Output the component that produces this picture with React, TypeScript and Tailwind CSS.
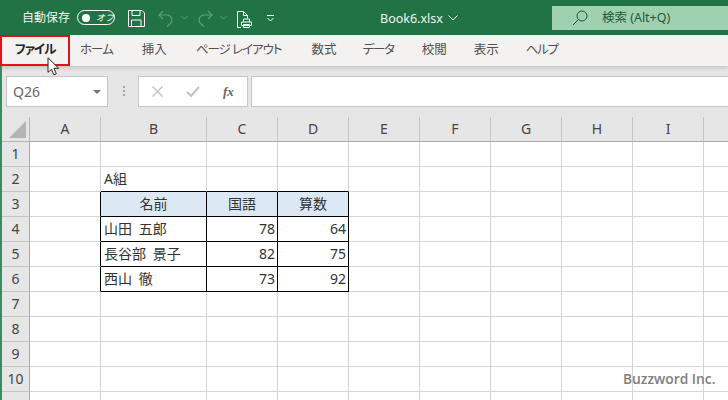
const font = '"Noto Sans","Noto Sans CJK JP",sans-serif';
const cols = ["A", "B", "C", "D", "E", "F", "G", "H", "I", ""];
const rows = [1, 2, 3, 4, 5, 6, 7, 8, 9, 10, 0];
const tabs = [
  { t: "ホーム", c: "tracking-[-1px]" },
  { t: "挿入", c: "ml-[29px]" },
  { t: "ページ レイアウト", c: "ml-[29px] tracking-[-1px]" },
  { t: "数式", c: "ml-[30px]" },
  { t: "データ", c: "ml-[26px] tracking-[-1.300px]" },
  { t: "校閲", c: "ml-[28px]" },
  { t: "表示", c: "ml-[27px]" },
  { t: "ヘルプ", c: "ml-[27px] tracking-[-1.300px]" },
];

type Cell = { t: string; align?: "left" | "right" | "center" };
const data: Record<string, Cell> = {
  B2: { t: "A組" },
  B3: { t: "名前", align: "center" },
  C3: { t: "国語", align: "center" },
  D3: { t: "算数", align: "center" },
  B4: { t: "山田 五郎" },
  C4: { t: "78", align: "right" },
  D4: { t: "64", align: "right" },
  B5: { t: "長谷部 景子" },
  C5: { t: "82", align: "right" },
  D5: { t: "75", align: "right" },
  B6: { t: "西山 徹" },
  C6: { t: "73", align: "right" },
  D6: { t: "92", align: "right" },
};

function cellClass(c: string, r: number) {
  const inTable = "BCD".includes(c || "Z") && r >= 3 && r <= 6;
  const right = inTable || (c === "A" && r >= 3 && r <= 6);
  const bottom = inTable || ("BCD".includes(c || "Z") && r === 2);
  const head = inTable && r === 3;
  return [
    "flex items-center overflow-hidden whitespace-nowrap border-r border-b pb-[2px] text-[14px] text-[#333333] [word-spacing:3px]",
    right ? "border-r-black" : "border-r-[#d4d4d4]",
    bottom ? "border-b-black" : "border-b-[#d4d4d4]",
    head ? "bg-[#dce9f5]" : "bg-white",
  ].join(" ");
}

function App() {
  return (
    <div className="relative flex h-[400px] w-[728px] flex-col overflow-hidden bg-[#e6e6e6]" style={{ fontFamily: font }}>
      {/* title bar */}
      <div className="flex h-[35px] shrink-0 items-start bg-[#217346] text-white">
        <span className="ml-[22px] mt-[9px] text-[12px] leading-[18px] text-[#f0f6f2]">自動保存</span>
        <div className="ml-[7px] mt-[10px] flex h-[15px] w-[38px] items-center rounded-full border border-white pl-[4px]">
          <span className="h-[8px] w-[8px] rounded-full bg-white" />
          <span className="ml-[6px] text-[9px] italic leading-none">オフ</span>
        </div>
        <svg className="ml-[13px] mt-[10px]" width="17" height="17" viewBox="0 0 17 17" fill="none" stroke="#fff" strokeWidth="1">
          <path d="M.5.5h13.500l2.500 2.500v13.500H.5z" />
          <path d="M4 .5v5h8v-5M3.500 16.500v-6.500h9.500v6.500" />
        </svg>
        <svg className="ml-[13px] mt-[10px]" width="16" height="17" viewBox="0 0 16 17" fill="none" stroke="#5a9e7a" strokeWidth="1.2">
          <path d="M5 1 1 5l4 4M1 5h8a5 5 0 0 1 3.500 8.500L9 16.500" />
        </svg>
        <svg className="ml-[7px] mt-[15px]" width="7" height="5" viewBox="0 0 7 5" fill="none" stroke="#5a9e7a" strokeWidth="1">
          <path d="m.5 1 3 3 3-3" />
        </svg>
        <svg className="ml-[9px] mt-[10px]" width="16" height="17" viewBox="0 0 16 17" fill="none" stroke="#5a9e7a" strokeWidth="1.2">
          <path d="m11 1 4 4-4 4M15 5H7a5 5 0 0 0-3.500 8.500L7 16.500" />
        </svg>
        <svg className="ml-[7px] mt-[15px]" width="7" height="5" viewBox="0 0 7 5" fill="none" stroke="#5a9e7a" strokeWidth="1">
          <path d="m.5 1 3 3 3-3" />
        </svg>
        <svg className="ml-[10px] mt-[11px]" width="15" height="17" viewBox="0 0 15 17" fill="none" stroke="#fff" strokeWidth="1">
          <path d="M4 16.500H.5V.5h6l4 4v3M6.500.5v4h4" />
          <path d="M6.500 11V8h6v3M4.500 11h10v3.500h-10zM6.500 13.500h6v3h-6z" fill="#217346" />
        </svg>
        <svg className="ml-[15px] mt-[15px]" width="7" height="7" viewBox="0 0 7 7" fill="none" stroke="#fff" strokeWidth="1">
          <path d="M0 .5h7M.5 3l3 3 3-3" />
        </svg>
        <span className="ml-[106px] mt-[9px] text-[12.500px] leading-[20px] text-[#eef5f0]">Book6.xlsx</span>
        <svg className="ml-[5px] mt-[15px]" width="10" height="6" viewBox="0 0 10 6" fill="none" stroke="#fff" strokeWidth="1">
          <path d="m.5.5 4.500 4.500 4.500-4.500" />
        </svg>
        <div className="ml-[94px] mt-[6px] flex h-[24px] flex-1 items-center bg-[#9fd0af] pl-[20px] text-[#1d5c3a]">
          <svg width="16" height="16" viewBox="0 0 16 16" fill="none" stroke="#1d5c3a" strokeWidth="1">
            <circle cx="10" cy="6" r="5" />
            <path d="M6.500 9.500 1 15" />
          </svg>
          <span className="ml-[14px] text-[12.500px] leading-none">検索 (Alt+Q)</span>
        </div>
      </div>

      {/* ribbon tabs */}
      <div className="flex h-[31px] shrink-0 items-center bg-[#f3f2f1] text-[12.500px] text-[#505050] shadow-[0_2px_4px_rgba(0,0,0,0.15)] [font-feature-settings:'palt']">
        <div className="flex h-full w-[70px] items-center justify-center border-[2.500px] border-[#e3101a] text-[12.500px] font-semibold tracking-[-1px] text-[#262626]">
          ファイル
        </div>
        <div className="ml-[10px] flex">
          {tabs.map((x) => (
            <span key={x.t} className={`whitespace-nowrap ${x.c}`}>{x.t}</span>
          ))}
        </div>
      </div>

      {/* body with green edge */}
      <div className="flex min-h-0 flex-1 flex-col border-l-2 border-[#3b8a63]">
        {/* formula bar */}
        <div className="flex h-[51px] shrink-0 items-start pt-[10px]">
          <div className="ml-[4px] flex h-[31px] w-[102px] items-center justify-between border border-[#c6c6c6] bg-white pl-[6px] pr-[6px] text-[14px] text-[#666666]">
            Q26
            <span className="h-0 w-0 border-x-[4px] border-t-[4px] border-x-transparent border-t-[#777777]" />
          </div>
          <div className="ml-[15px] mt-[10px] flex flex-col gap-[2px]">
            <span className="h-[2px] w-[2px] bg-[#a6a6a6]" />
            <span className="h-[2px] w-[2px] bg-[#a6a6a6]" />
            <span className="h-[2px] w-[2px] bg-[#a6a6a6]" />
          </div>
          <div className="ml-[13px] flex h-[31px] w-[110px] items-center border border-[#c6c6c6] bg-white">
            <svg className="ml-[13px]" width="11" height="11" viewBox="0 0 11 11" stroke="#c4c4c4" strokeWidth="1.500">
              <path d="m.5.5 10 10M10.500.5l-10 10" />
            </svg>
            <svg className="ml-[23px]" width="14" height="11" viewBox="0 0 14 11" fill="none" stroke="#c4c4c4" strokeWidth="2">
              <path d="m1 6 4 4 8-9" />
            </svg>
            <span className="ml-[23px] text-[13px] font-bold italic text-[#666666]" style={{ fontFamily: '"Liberation Serif",serif' }}>fx</span>
          </div>
          <div className="ml-[3px] h-[31px] flex-1 border border-r-0 border-[#c6c6c6] bg-white" />
        </div>

        {/* sheet */}
        <div className="grid grid-cols-[28px_71px_106px_repeat(8,71px)] grid-rows-[25px_repeat(11,25px)] min-h-0 flex-1 overflow-hidden">
          <div className="relative border-r border-b border-[#b4b4b4]">
            <span className="absolute bottom-[3px] right-[3px] h-0 w-0 border-b-[17px] border-l-[17px] border-b-[#b4b4b4] border-l-transparent" />
          </div>
          {cols.map((c, i) => (
            <div key={i} className="flex items-center justify-center border-r border-b border-r-[#c4c4c4] border-b-[#a8a8a8] pb-[2px] text-[14px] text-[#444444]">
              {c}
            </div>
          ))}
          {rows.map((r) => (
            <div key={r} className="contents">
              <div className="flex items-center justify-center border-r border-b border-r-[#a8a8a8] border-b-[#c4c4c4] pb-[2px] text-[14px] text-[#444444]">
                {r > 0 ? r : ""}
              </div>
              {cols.map((c, i) => {
                const cell = data[c + r];
                return (
                  <div
                    key={i}
                    className={`${cellClass(c, r)} ${cell?.align === "center" ? "justify-center" : cell?.align === "right" ? "justify-end pr-[2px]" : "pl-[3px]"}`}
                  >
                    {cell?.t}
                  </div>
                );
              })}
            </div>
          ))}
        </div>
      </div>

      {/* watermark */}
      <span className="absolute left-[623px] top-[369px] text-[13.800px] font-semibold leading-[20px] text-[#808080]" style={{ fontFamily: '"Open Sans",sans-serif' }}>
        Buzzword Inc.
      </span>

      {/* mouse pointer */}
      <svg className="absolute left-[47px] top-[57px]" width="14" height="20" viewBox="0 0 14 20">
        <path d="M1 .8v14.500l3.500-3 2.300 5.500 2.500-1-2.300-5.500h4.700z" fill="#fff" stroke="#222" strokeWidth="1" />
      </svg>
    </div>
  );
}

export default App;
